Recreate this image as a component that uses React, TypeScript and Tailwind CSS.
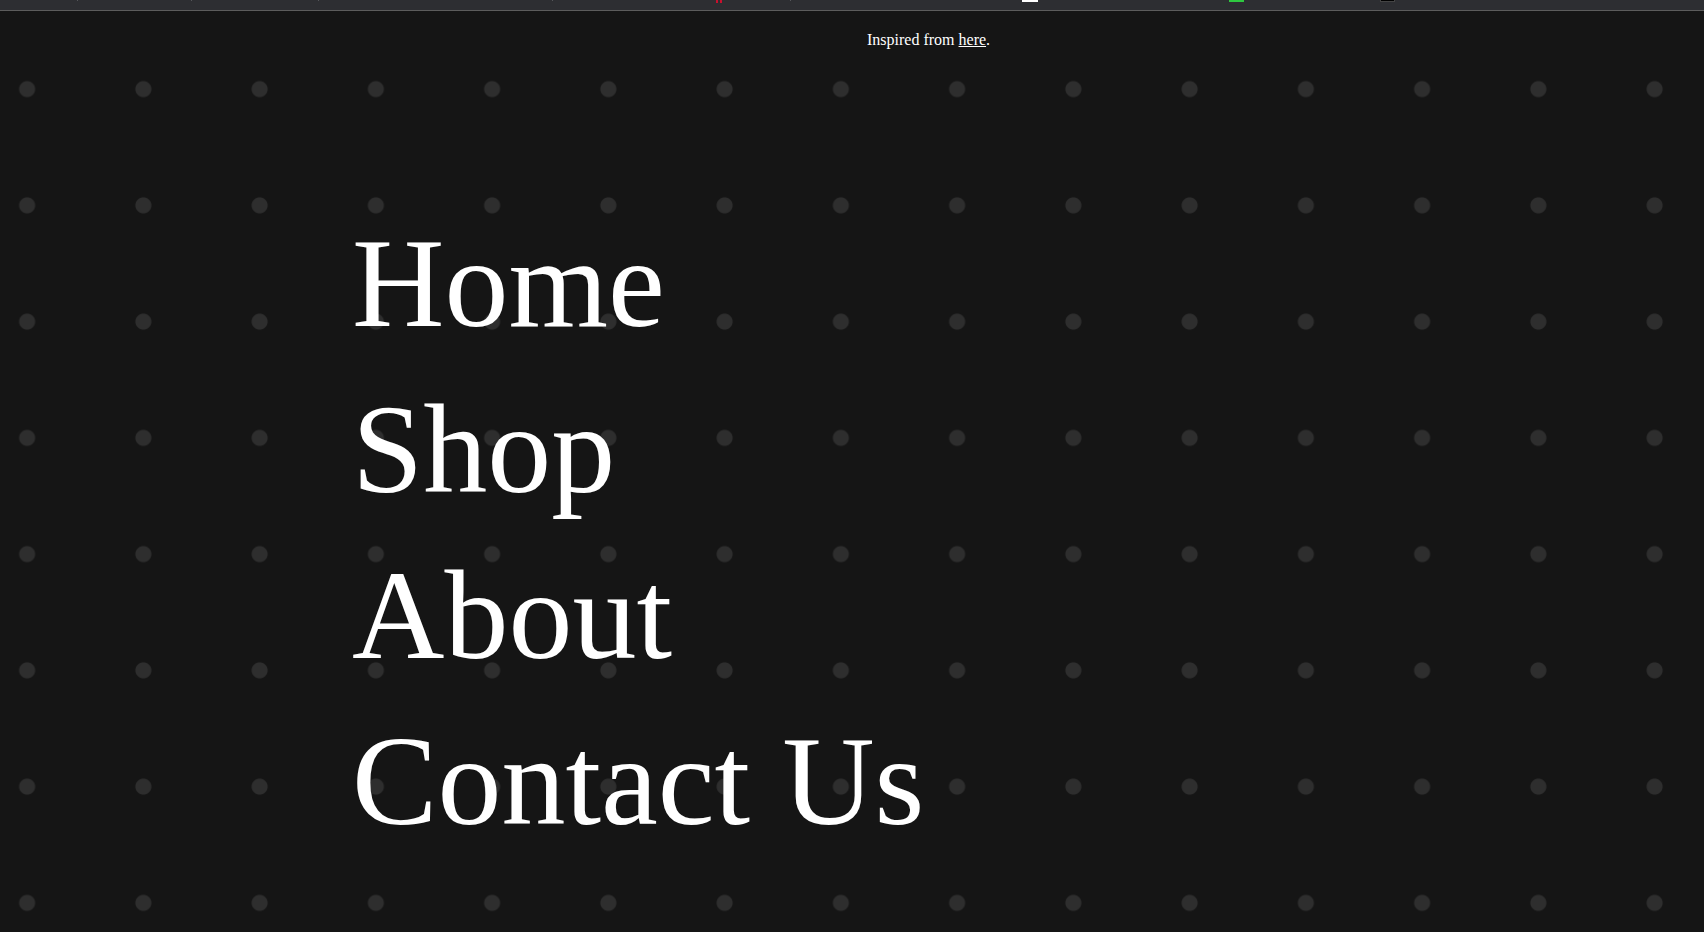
const links = ["Home", "Shop", "About", "Contact Us"];

function TopBar() {
  return (
    <div className="flex h-[11px] items-start border-b border-[#5c5c5c] bg-[#2d2e32]">
      <span className="ml-[77px] h-px w-px bg-[#55565a]" />
      <span className="ml-[113px] h-px w-px bg-[#55565a]" />
      <span className="ml-[126px] h-px w-px bg-[#55565a]" />
      <span className="ml-[233px] h-px w-px bg-[#55565a]" />
      <span className="ml-[163px] h-[3px] w-[2px] bg-[#c8102e]" />
      <span className="ml-[2px] h-[3px] w-[2px] bg-[#c8102e]" />
      <span className="ml-[68px] h-px w-px bg-[#55565a]" />
      <span className="ml-[231px] h-[2px] w-[16px] bg-white" />
      <span className="ml-[191px] h-[2px] w-[15px] bg-[#2ec840]" />
      <span className="ml-[136px] h-[2px] w-[15px] border-x border-b border-[#444] bg-black" />
    </div>
  );
}

export default function App() {
  return (
    <div className="min-h-screen bg-[#151515] bg-[radial-gradient(circle,#2e2e2e_7.5px,transparent_8.5px)] bg-[length:116.25px_116.25px] bg-[position:-31px_31px] font-['Liberation_Serif',serif] text-white">
      <TopBar />

      <p className="mt-[20px] pl-[867px] text-base leading-[18px]">
        Inspired from <a href="#" className="underline">here</a>.
      </p>

      {/* menu */}
      <nav className="mt-[151px] pl-[352px]">
        <ul>
          {links.map((link) => (
            <li key={link} className="text-[128px] leading-[166px]">
              <a href="#">{link}</a>
            </li>
          ))}
        </ul>
      </nav>
    </div>
  );
}
